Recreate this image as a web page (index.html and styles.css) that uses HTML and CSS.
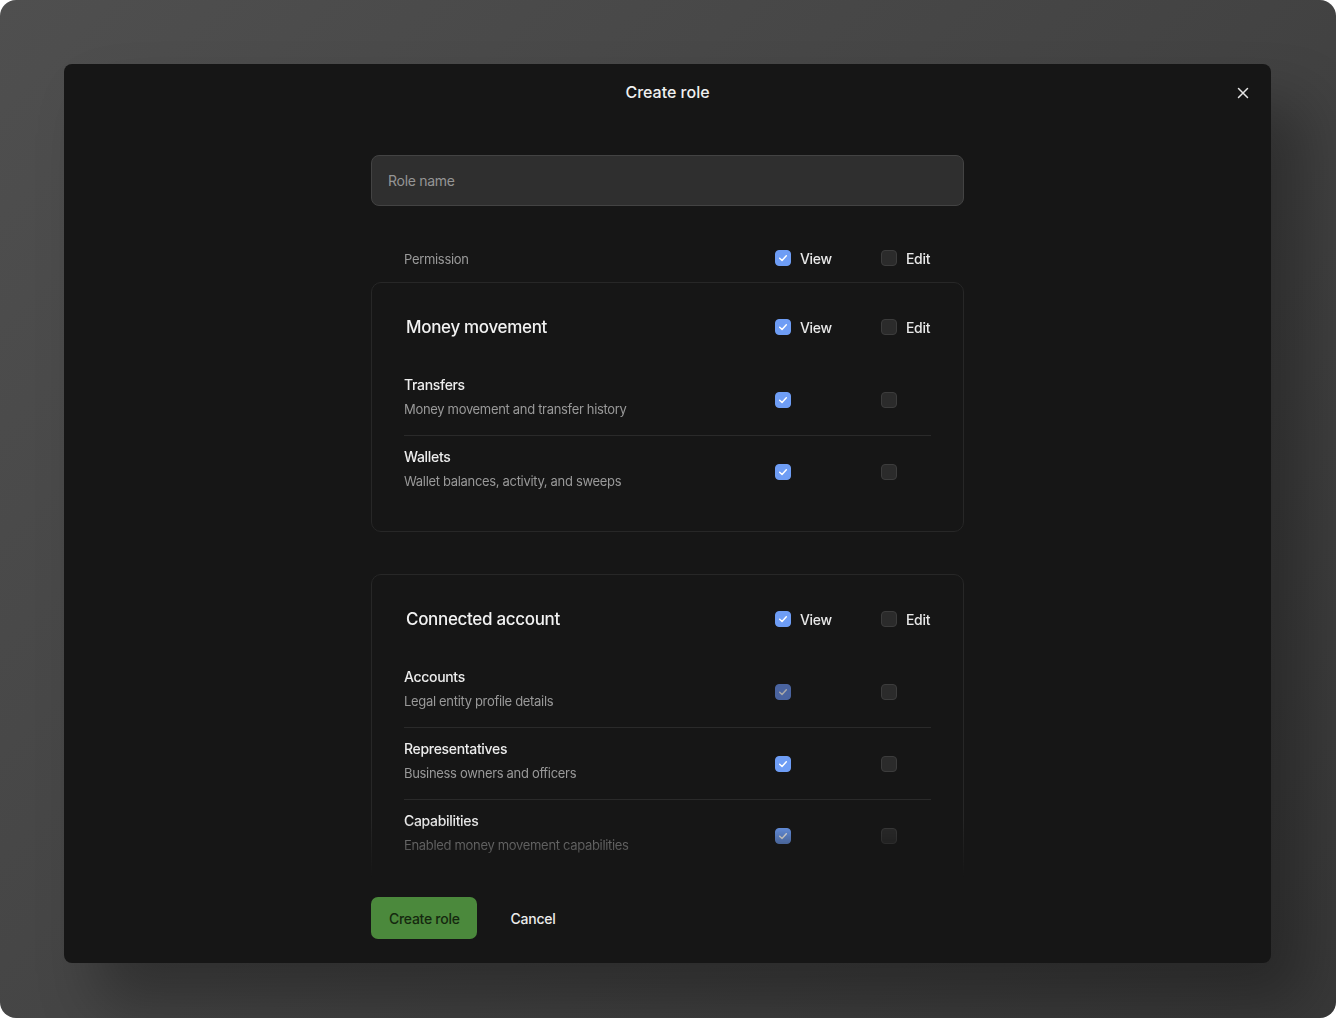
FILE: index.html
```html
<!DOCTYPE html>
<html lang="en">
<head>
    <meta charset="UTF-8">
    <meta name="viewport" content="width=device-width, initial-scale=1.0">
    <title>Create role</title>
    <link rel="stylesheet" href="styles.css">
</head>
<body>

<div class="frame">
    <div class="modal">
        <div class="modal-head">
            <h1>Create role</h1>
            <button class="close" aria-label="Close">
                <svg width="12" height="12" viewBox="0 0 12 12"><path d="M1.5 1.5L10.5 10.5M10.5 1.5L1.5 10.5" stroke="#e6e6e6" stroke-width="1.5" stroke-linecap="round"/></svg>
            </button>
        </div>

        <div class="modal-body">
            <div class="content">
                <input class="role-input" type="text" placeholder="Role name">

                <div class="perm-row perm-head">
                    <span class="perm-label">Permission</span>
                    <label class="check-label"><span class="cb checked"><svg viewBox="0 0 16 16"><path d="M4.2 8.3L6.9 10.8L11.8 5.4"/></svg></span>View</label>
                    <label class="check-label"><span class="cb"></span>Edit</label>
                </div>

                <!-- money movement -->
                <section class="card">
                    <div class="perm-row card-title">
                        <h2>Money movement</h2>
                        <label class="check-label"><span class="cb checked"><svg viewBox="0 0 16 16"><path d="M4.2 8.3L6.9 10.8L11.8 5.4"/></svg></span>View</label>
                        <label class="check-label"><span class="cb"></span>Edit</label>
                    </div>
                    <div class="perm-row item">
                        <div class="item-text">
                            <div class="item-name">Transfers</div>
                            <div class="item-desc">Money movement and transfer history</div>
                        </div>
                        <span class="cb checked"><svg viewBox="0 0 16 16"><path d="M4.2 8.3L6.9 10.8L11.8 5.4"/></svg></span>
                        <span class="cb"></span>
                    </div>
                    <div class="perm-row item">
                        <div class="item-text">
                            <div class="item-name">Wallets</div>
                            <div class="item-desc">Wallet balances, activity, and sweeps</div>
                        </div>
                        <span class="cb checked"><svg viewBox="0 0 16 16"><path d="M4.2 8.3L6.9 10.8L11.8 5.4"/></svg></span>
                        <span class="cb"></span>
                    </div>
                </section>

                <!-- connected account -->
                <section class="card card-long">
                    <div class="perm-row card-title">
                        <h2>Connected account</h2>
                        <label class="check-label"><span class="cb checked"><svg viewBox="0 0 16 16"><path d="M4.2 8.3L6.9 10.8L11.8 5.4"/></svg></span>View</label>
                        <label class="check-label"><span class="cb"></span>Edit</label>
                    </div>
                    <div class="perm-row item">
                        <div class="item-text">
                            <div class="item-name">Accounts</div>
                            <div class="item-desc">Legal entity profile details</div>
                        </div>
                        <span class="cb checked disabled"><svg viewBox="0 0 16 16"><path d="M4.2 8.3L6.9 10.8L11.8 5.4"/></svg></span>
                        <span class="cb"></span>
                    </div>
                    <div class="perm-row item">
                        <div class="item-text">
                            <div class="item-name">Representatives</div>
                            <div class="item-desc">Business owners and officers</div>
                        </div>
                        <span class="cb checked"><svg viewBox="0 0 16 16"><path d="M4.2 8.3L6.9 10.8L11.8 5.4"/></svg></span>
                        <span class="cb"></span>
                    </div>
                    <div class="perm-row item">
                        <div class="item-text">
                            <div class="item-name">Capabilities</div>
                            <div class="item-desc">Enabled money movement capabilities</div>
                        </div>
                        <span class="cb checked"><svg viewBox="0 0 16 16"><path d="M4.2 8.3L6.9 10.8L11.8 5.4"/></svg></span>
                        <span class="cb"></span>
                    </div>
                </section>
            </div>
        </div>

        <div class="modal-foot">
            <div class="content foot-row">
                <button class="btn-primary">Create role</button>
                <button class="btn-text">Cancel</button>
            </div>
        </div>
    </div>
</div>

</body>
</html>
```

FILE: styles.css
```css
html, body {
    margin: 0;
    padding: 0;
    background-color: #ffffff;
}
body {
    font-family: 'Inter', 'Noto Sans', sans-serif;
    color: #ececec;
    letter-spacing: -0.02em;
}
.frame {
    box-sizing: border-box;
    width: 1336px;
    height: 1018px;
    padding: 64px 65px 55px 64px;
    display: flex;
    border-radius: 16px;
    overflow: hidden;
    background: linear-gradient(135deg, #4f4f4f 0%, #444444 50%, #383838 100%);
}
.modal {
    flex: 1;
    display: flex;
    flex-direction: column;
    background-color: #161616;
    border-radius: 8px;
    box-shadow: 34px 40px 60px rgba(0, 0, 0, 0.3);
    overflow: hidden;
}
.modal-head {
    position: relative;
    height: 56px;
    flex: none;
    display: flex;
    align-items: center;
    justify-content: center;
}
.modal-head h1 {
    margin: 0;
    font-size: 16px;
    font-weight: 500;
    color: #f0f0f0;
    letter-spacing: 0;
}
.close {
    position: absolute;
    right: 21px;
    top: 22px;
    width: 14px;
    height: 14px;
    padding: 0;
    border: none;
    background: none;
    display: flex;
    align-items: center;
    justify-content: center;
    cursor: pointer;
}
.modal-body {
    flex: 1;
    overflow: hidden;
    padding-top: 35px;
    -webkit-mask-image: linear-gradient(to bottom, #000 calc(100% - 65px), transparent calc(100% - 8px));
    mask-image: linear-gradient(to bottom, #000 calc(100% - 65px), transparent calc(100% - 8px));
}
.content {
    width: 593px;
    margin: 0 auto;
}
.role-input {
    box-sizing: border-box;
    display: block;
    width: 100%;
    height: 51px;
    padding: 0 16px;
    background-color: #2f2f2f;
    border: 1px solid #434343;
    border-radius: 8px;
    font-family: 'Inter', 'Noto Sans', sans-serif;
    font-size: 14px;
    letter-spacing: -0.02em;
    color: #eeeeee;
    outline: none;
}
.role-input::placeholder {
    color: #959595;
}
.perm-row {
    display: grid;
    grid-template-columns: 1fr 106px 50px;
    align-items: center;
}
.perm-head {
    height: 24px;
    margin-top: 40px;
    margin-bottom: 12px;
    padding: 0 33px;
}
.perm-label {
    font-size: 13px;
    color: #9a9a9a;
    padding-top: 1px;
}
.check-label {
    display: flex;
    align-items: center;
    gap: 9px;
    font-size: 14px;
    font-weight: 500;
    color: #e8e8e8;
}
.cb {
    box-sizing: border-box;
    width: 16px;
    height: 16px;
    border-radius: 4px;
    background-color: #2b2b2b;
    border: 1px solid #3c3c3c;
    display: flex;
    align-items: center;
    justify-content: center;
}
.cb svg {
    width: 16px;
    height: 16px;
    fill: none;
    stroke: #ffffff;
    stroke-width: 1.7;
    stroke-linecap: round;
    stroke-linejoin: round;
}
.cb.checked {
    background-color: #6e9df5;
    border-color: #6e9df5;
}
.cb.disabled {
    background-color: #4a64a0;
    border-color: #4a64a0;
}
.cb.disabled svg {
    stroke: #a8a8a8;
}
.card {
    border: 1px solid #272727;
    border-radius: 10px;
    padding: 24px 32px 24px 32px;
    margin-bottom: 42px;
}
.card-long {
    padding-bottom: 60px;
}
.card-title {
    height: 40px;
    margin-bottom: 17px;
}
.card-title h2 {
    margin: 0;
    padding-left: 2px;
    font-size: 17px;
    font-weight: 500;
    color: #f2f2f2;
}
.item {
    padding: 11px 0 16px 0;
    border-bottom: 1px solid #2a2a2a;
}
.item:last-child {
    border-bottom: none;
}
.item .cb {
    margin-top: 6px;
}
.item-name {
    font-size: 14px;
    font-weight: 500;
    line-height: 20px;
    color: #ededed;
}
.item-desc {
    margin-top: 4px;
    font-size: 13px;
    line-height: 20px;
    color: #999999;
}
.modal-foot {
    flex: none;
    height: 78px;
    box-sizing: border-box;
    padding-top: 12px;
}
.foot-row {
    display: flex;
    align-items: center;
    gap: 18px;
}
.btn-primary,
.btn-text {
    display: inline-flex;
    align-items: center;
    justify-content: center;
    height: 42px;
    border: none;
    font-family: 'Inter', 'Noto Sans', sans-serif;
    font-size: 14px;
    font-weight: 500;
    letter-spacing: -0.02em;
    cursor: pointer;
}
.btn-primary {
    padding: 0 17px 0 18px;
    border-radius: 7px;
    background-color: #4b893c;
    color: #15280f;
}
.btn-text {
    padding: 0 16px;
    background: none;
    color: #ececec;
}
```
